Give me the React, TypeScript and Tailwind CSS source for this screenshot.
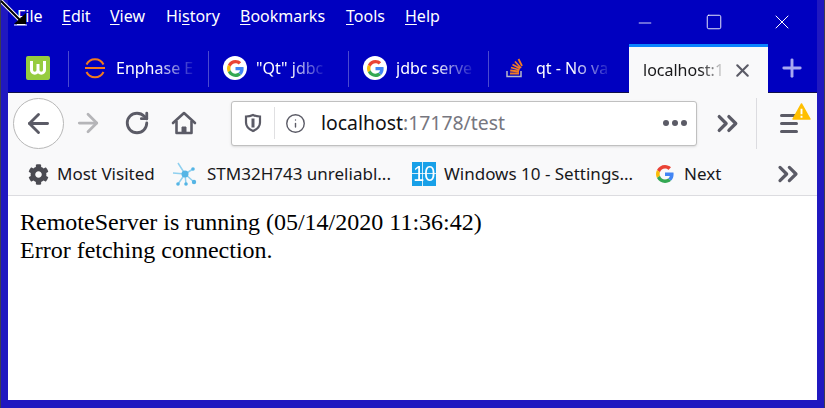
import { Info, RotateCw, ArrowLeft, ArrowRight, ChevronsRight, Minus, Square, X, Plus } from 'lucide-react'
import { FaCog } from 'react-icons/fa'

const menuItems = [
  { key: 'F', rest: 'ile', width: 'w-[45px]' },
  { key: 'E', rest: 'dit', width: 'w-[48px]' },
  { key: 'V', rest: 'iew', width: 'w-[56px]' },
  { key: '', rest: 'History', width: 'w-[74px]' },
  { key: 'B', rest: 'ookmarks', width: 'w-[106px]' },
  { key: 'T', rest: 'ools', width: 'w-[59px]' },
  { key: 'H', rest: 'elp', width: 'w-[40px]' },
]

function GoogleIcon({ size }: { size: number }) {
  return (
    <svg width={size} height={size} viewBox="0 0 48 48">
      <path fill="#EA4335" d="M24 9.500c3.500 0 6.700 1.300 9.100 3.500l6.800-6.800C35.800 2.400 30.300 0 24 0 14.600 0 6.500 5.400 2.600 13.200l7.900 6.200C12.400 13.600 17.700 9.500 24 9.500z" />
      <path fill="#4285F4" d="M46.900 24.500c0-1.600-.1-3.100-.4-4.500H24v9h12.900c-.6 3-2.200 5.500-4.700 7.200l7.700 6c4.500-4.100 7-10.300 7-17.700z" />
      <path fill="#FBBC05" d="M10.500 28.600c-.5-1.400-.8-3-.8-4.600s.3-3.200.8-4.600l-7.900-6.200C.9 16.500 0 20.100 0 24s.9 7.500 2.600 10.800l7.900-6.200z" />
      <path fill="#34A853" d="M24 48c6.500 0 11.900-2.100 15.900-5.800l-7.700-6c-2.200 1.400-4.900 2.300-8.200 2.300-6.300 0-11.600-4.100-13.500-9.900l-7.900 6.200C6.500 42.600 14.600 48 24 48z" />
    </svg>
  )
}

function GoogleBadge() {
  return (
    <span className="flex h-6 w-6 items-center justify-center rounded-full bg-white">
      <GoogleIcon size={17} />
    </span>
  )
}

function EnphaseIcon() {
  return (
    <svg width="22" height="22" viewBox="0 0 22 22" fill="none" stroke="#f07a1e" strokeWidth="2">
      <path d="M2.500 7.500a9.500 9.500 0 0 1 17 0" />
      <path d="M1 11h20" />
      <path d="M2.500 15a9.500 9.500 0 0 0 17 0" />
    </svg>
  )
}

function StackIcon() {
  return (
    <svg width="20" height="22" viewBox="0 0 20 22" fill="none">
      <path d="M2 14v5.500h14V14" stroke="#b8b8c8" strokeWidth="1.500" />
      <path d="M5 16.500h9M5.200 13.500l8.800 1M6 10.500l8.500 2.500M7.500 7.500l7.500 4M10 4.500l6 6.500M13.500 2l3.500 7" stroke="#f07a24" strokeWidth="1.800" />
    </svg>
  )
}

function WLogo() {
  return (
    <div className="flex h-6 w-6 items-center justify-center rounded-[2px] bg-[#96cc3f]">
      <svg width="18" height="18" viewBox="0 0 18 18" fill="none" stroke="#fff" strokeWidth="3">
        <path d="M2.500 2v9a3 3 0 0 0 6.500 0V5v6a3 3 0 0 0 6.500 0V2" />
      </svg>
    </div>
  )
}

function Tab({ icon, label }: { icon: React.ReactNode; label: string }) {
  return (
    <div className="flex h-[48px] w-[139px] items-center pl-[11px]">
      <span className="flex w-[30px] shrink-0 justify-center">{icon}</span>
      <span className="ml-[6px] whitespace-nowrap text-[16px] text-white [mask-image:linear-gradient(to_right,#000_50%,rgba(0,0,0,0.1)_100%)]">
        {label}
      </span>
    </div>
  )
}

function TabDivider() {
  return <span className="mt-[7px] h-[36px] w-px shrink-0 bg-[#4a4ad0]" />
}

function ShieldIcon() {
  return (
    <svg width="20" height="20" viewBox="0 0 20 20" fill="none" stroke="#5b5b66" strokeWidth="2.200">
      <path d="M10 2c2.500 1.200 4.500 1.500 7 1.500v6c0 4-3 6.800-7 8.500-4-1.700-7-4.500-7-8.500v-6C5.500 3.500 7.500 3.200 10 2z" />
      <path d="M10 5.500v9" strokeWidth="3" />
    </svg>
  )
}

function HomeIcon() {
  return (
    <svg width="26" height="26" viewBox="0 0 26 26" fill="none" stroke="#5b5b66" strokeWidth="2.600" strokeLinejoin="round">
      <path d="M2 13 13 3l11 10" strokeLinecap="round" />
      <path d="M5.500 11v12h15V11" />
      <path d="M11 23v-6h4v6z" fill="#5b5b66" strokeWidth="1" />
    </svg>
  )
}

function MeshIcon() {
  return (
    <svg width="26" height="26" viewBox="0 0 26 26" stroke="#8fd0ef" strokeWidth="1.500" fill="#55b5e5">
      <path d="M13 13 6 2M13 13 1 12M13 13 6 23M13 13l8-5M13 13l9 8M13 13l1 10" />
      <circle cx="13" cy="13" r="3.500" stroke="none" />
      <circle cx="22" cy="21" r="2.200" stroke="none" />
      <circle cx="21" cy="8" r="1.800" stroke="none" />
      <circle cx="6" cy="23" r="1.800" stroke="none" />
      <circle cx="14" cy="23" r="1.800" stroke="none" />
    </svg>
  )
}

function WindowsSettingsIcon() {
  return (
    <div className="relative flex h-[24px] w-[24px] items-center justify-center overflow-hidden bg-[#18a0e8] font-['Liberation_Sans',sans-serif] text-[22px] leading-none text-white">
      <span className="scale-x-90">10</span>
      <span className="absolute inset-x-0 top-[11px] h-px bg-white/80" />
      <span className="absolute inset-y-0 left-[10px] w-px bg-white/80" />
    </div>
  )
}

export default function App() {
  return (
    <div className="relative flex h-[408px] w-[825px] flex-col border-r border-l border-[#3c3c50] bg-[#2018c0] px-[7px] pb-[8px] font-['Noto_Sans',sans-serif]">
      <div className="h-[93px] shrink-0 border-b border-[#10104a] bg-[#0000c0]">
        <div className="flex h-[44px] items-start justify-between">
          <div className="flex pt-[4px] pl-[9px] text-[16px] text-white">
            {menuItems.map((item) => (
              <span className={item.width + ' whitespace-nowrap'} key={item.rest}>
                {item.key ? <span className="underline underline-offset-2">{item.key}</span> : null}
                {item.key ? item.rest : (
                  <>
                    Hi<span className="underline underline-offset-2">s</span>tory
                  </>
                )}
              </span>
            ))}
          </div>
          <div className="flex h-[44px] items-center text-white">
            <span className="flex w-[69px] justify-center pt-[1px]"><Minus size={20} strokeWidth={1} /></span>
            <span className="flex w-[69px] justify-center"><Square size={18} strokeWidth={1.200} /></span>
            <span className="flex w-[69px] justify-center pr-[2px]"><X size={24} strokeWidth={1} /></span>
          </div>
        </div>
        <div className="flex h-[48px] items-start">
          <div className="flex h-[48px] w-[60px] items-center pl-[18px]">
            <WLogo />
          </div>
          <TabDivider />
          <Tab icon={<EnphaseIcon />} label="Enphase E" />
          <TabDivider />
          <Tab icon={<GoogleBadge />} label={'"Qt" jdbc'} />
          <TabDivider />
          <Tab icon={<GoogleBadge />} label="jdbc serve" />
          <TabDivider />
          <Tab icon={<StackIcon />} label="qt - No va" />
          <span className="w-px shrink-0" />
          <div className="flex h-[49px] w-[139px] items-center justify-between border-t-[3px] border-[#0a84ff] bg-[#f9f9fa] pr-[15px] pl-[14px]">
            <span className="whitespace-nowrap text-[16px] text-[#18181a] [mask-image:linear-gradient(to_right,#000_70%,rgba(0,0,0,0.1)_100%)]">
              localhost:1
            </span>
            <X className="text-[#5b5b66]" size={21} strokeWidth={2.400} />
          </div>
          <div className="flex h-[48px] flex-1 items-center justify-center pr-[1px] text-[#a8a8f0]">
            <Plus size={28} strokeWidth={2.500} />
          </div>
        </div>
      </div>

      <div className="flex h-[60px] shrink-0 items-center bg-[#f9f9fa] pl-[5px] text-[#5b5b66]">
        <div className="flex h-[51px] w-[51px] items-center justify-center rounded-full border border-[#b8b8b8] bg-white">
          <ArrowLeft size={31} strokeWidth={2.200} />
        </div>
        <ArrowRight className="ml-[9px] text-[#b5b5b8]" size={30} strokeWidth={2.200} />
        <RotateCw className="ml-[21px]" size={26} strokeWidth={2.600} />
        <span className="ml-[21px]"><HomeIcon /></span>
        <div className="ml-[34px] flex h-[45px] w-[466px] items-center rounded-[3px] border border-[#c0c0c0] bg-white shadow-sm">
          <span className="flex w-[42px] justify-center"><ShieldIcon /></span>
          <span className="h-[32px] w-px bg-[#e0e0e2]" />
          <Info className="ml-[10px]" size={21} strokeWidth={1.600} />
          <span className="ml-[15px] flex-1 text-[19.400px] text-[#77777f]">
            <span className="text-[#111114]">localhost</span>:17178/test
          </span>
          <span className="mr-[9px] flex gap-[3px]">
            <span className="h-[6px] w-[6px] rounded-full bg-[#5b5b66]" />
            <span className="h-[6px] w-[6px] rounded-full bg-[#5b5b66]" />
            <span className="h-[6px] w-[6px] rounded-full bg-[#5b5b66]" />
          </span>
        </div>
        <ChevronsRight className="ml-[14px]" size={33} strokeWidth={2.400} />
        <span className="ml-[12px] h-[51px] w-px bg-[#dcdce0]" />
        <div className="relative ml-[23px]">
          <div className="flex flex-col gap-[5px]">
            <span className="h-[3px] w-[18px] rounded-sm bg-[#5b5b66]" />
            <span className="h-[3px] w-[18px] rounded-sm bg-[#5b5b66]" />
            <span className="h-[3px] w-[18px] rounded-sm bg-[#5b5b66]" />
          </div>
          <svg className="absolute -top-[11px] left-[12px]" width="19" height="17" viewBox="0 0 20 18">
            <path d="M10 1 19 17H1z" fill="#ffbf00" stroke="#ffbf00" strokeWidth="1.500" strokeLinejoin="round" />
            <path d="M10 6v6M10 13.500v2" stroke="#fff" strokeWidth="2" />
          </svg>
        </div>
      </div>

      <div className="flex h-[43px] shrink-0 items-center border-b border-[#dcdce0] bg-[#f9f9fa] text-[17px] text-[#18181a]">
        <FaCog className="ml-[20px] w-[21px] text-[#4b4b52]" size={21} />
        <span className="ml-[8px] w-[115px] whitespace-nowrap">Most Visited</span>
        <MeshIcon />
        <span className="ml-[9px] w-[205px] whitespace-nowrap">STM32H743 unreliabl...</span>
        <WindowsSettingsIcon />
        <span className="ml-[8px] w-[212px] whitespace-nowrap">Windows 10 - Settings...</span>
        <GoogleIcon size={18} />
        <span className="ml-[10px] w-[88px] whitespace-nowrap">Next</span>
        <ChevronsRight className="text-[#5b5b66]" size={32} strokeWidth={2.400} />
      </div>

      <div className="flex-1 bg-white pt-[13px] pl-[12px] font-['Liberation_Serif',serif] text-[24px] leading-[27.500px] text-black">
        <p>RemoteServer is running (05/14/2020 11:36:42)</p>
        <p>Error fetching connection.</p>
      </div>

      <svg className="absolute top-0 left-0" width="28" height="26" viewBox="0 0 28 26">
        <path d="M0 1 20 21" stroke="#fff" strokeWidth="4" />
        <path d="M0 1 21 22" stroke="#000" strokeWidth="2" />
        <path d="M13 24h12V13z" fill="#000" />
        <path d="M13 25h13" stroke="#fff" strokeWidth="1" />
      </svg>
    </div>
  )
}
